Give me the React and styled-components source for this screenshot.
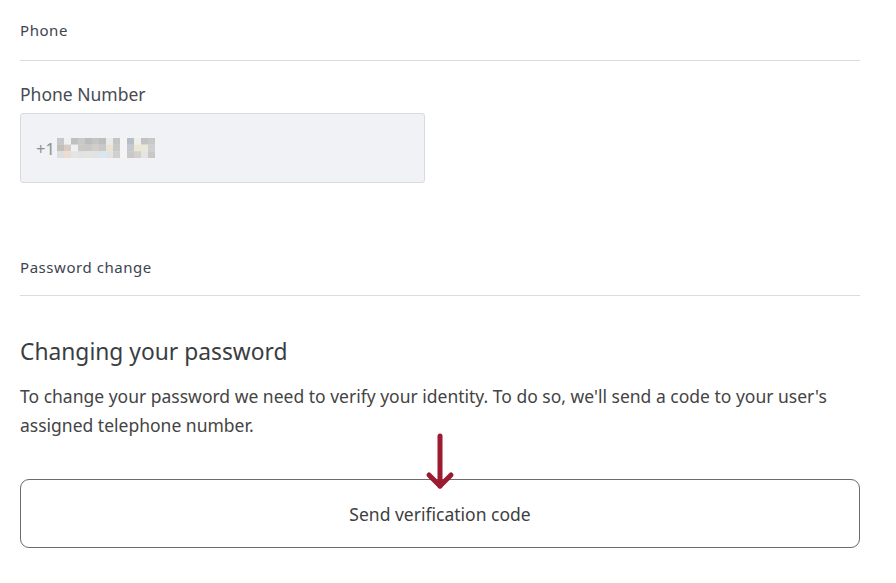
import React from "react";
import styled, { createGlobalStyle } from "styled-components";

const Global = createGlobalStyle`
  html, body { margin: 0; padding: 0; background: #fff; }
  body { font-family: "Noto Sans", "Open Sans", sans-serif; color: #444; }
`;

const Page = styled.div`
  width: 840px;
  padding: 0 36px 0 20px;
  display: flex;
  flex-direction: column;
`;

const SectionHeader = styled.div`
  height: ${(p) => p.$h}px;
  margin-top: ${(p) => p.$mt || 0}px;
  display: flex;
  align-items: center;
  box-sizing: border-box;
  border-bottom: 1px solid #dcdcdc;
  font-size: 15px;
  letter-spacing: 0.55px;
  color: #3e4450;
`;

const FieldLabel = styled.label`
  margin-top: 21px;
  font-size: 17.5px;
  line-height: 24px;
  color: #474b53;
`;

const ReadOnlyInput = styled.div`
  margin-top: 7px;
  width: 405px;
  height: 70px;
  box-sizing: border-box;
  border: 1px solid #dadbde;
  border-radius: 3px;
  background: #f1f2f6;
  display: flex;
  align-items: center;
  padding-left: 15px;
  gap: 2px;
  font-size: 16.5px;
  color: #8f8f8f;
`;

const Heading = styled.h2`
  margin: 41px 0 0;
  font-size: 22.8px;
  font-weight: 400;
  line-height: 30px;
  color: #3a3d42;
`;

const Paragraph = styled.p`
  margin: 15px 0 0;
  font-size: 17.5px;
  line-height: 29px;
  color: #444;
`;

const ButtonWrap = styled.div`
  position: relative;
  margin-top: 39px;
`;

const OutlineButton = styled.button`
  width: 100%;
  height: 69px;
  border: 1px solid #6b6b6b;
  border-radius: 9px;
  background: #fff;
  font-family: "Noto Sans", sans-serif;
  font-size: 17.5px;
  color: #3e3e3e;
  cursor: pointer;
`;

const Arrow = styled.svg`
  position: absolute;
  left: 50%;
  top: -46px;
  transform: translateX(-50%);
  overflow: visible;
`;

const mosaic = [
  ["#c8c8c8", "#f0f0f0", "#bfbfbf", "#c9c9c9", "#bcbcbc", "#c4c4c4", "#bdbdbd", "#e8ece8", "#c4c4c4", "#f4f4f4", "#b8bec8", "#eeeeea", "#c2c2c2", "#c8c8c8"],
  ["#c3c0bb", "#d6cdc2", "#f0f0f2", "#cbc8c6", "#c8c8c8", "#d0cec8", "#c8c8c8", "#e8e3d2", "#c8c8c8", "#f4f4f4", "#c4c8d0", "#ece6d4", "#ece8d8", "#cfcfcf"],
  ["#dddddd", "#ecdcd0", "#e4e4e4", "#e2e2e2", "#e4e4e0", "#e2e2e2", "#d8e8f0", "#e2e2e2", "#d0d0d0", "#f4f4f4", "#c8c8c8", "#d4d0cc", "#e4e4e4", "#c8c8c8"],
];

const Mosaic = () => (
  <svg width="98" height="20" viewBox="0 0 98 20">
    {mosaic.map((row, r) =>
      row.map((c, i) => (
        <rect key={`${r}-${i}`} x={i * 7} y={r * 6.6} width="7" height="6.8" fill={c} />
      ))
    )}
  </svg>
);

export default function App() {
  return (
    <>
      <Global />
      <Page>
        <SectionHeader $h={61}>Phone</SectionHeader>
        <FieldLabel>Phone Number</FieldLabel>
        <ReadOnlyInput>
          <span>+1</span>
          <Mosaic />
        </ReadOnlyInput>
        <SectionHeader $h={57} $mt={56}>Password change</SectionHeader>
        <Heading>Changing your password</Heading>
        <Paragraph>
          To change your password we need to verify your identity. To do so, we'll send a code to your user's assigned telephone number.
        </Paragraph>
        <ButtonWrap>
          <Arrow width="30" height="58" viewBox="0 0 30 58">
            <g stroke="#9b1b30" strokeWidth="5" strokeLinecap="round" strokeLinejoin="round" fill="none">
              <path d="M15 3 V53" />
              <path d="M4 42 L15 53 L26 42" />
            </g>
          </Arrow>
          <OutlineButton>Send verification code</OutlineButton>
        </ButtonWrap>
      </Page>
    </>
  );
}
